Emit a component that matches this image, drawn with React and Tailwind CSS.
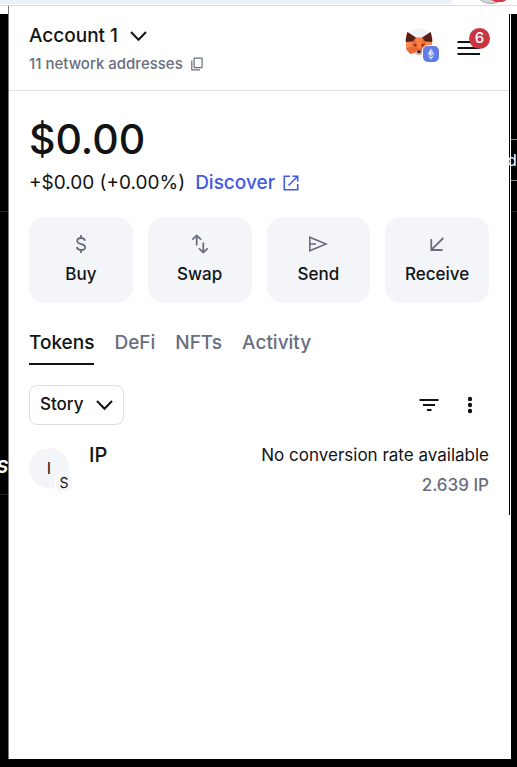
import React, { useState } from "react";

const tabs = ["Tokens", "DeFi", "NFTs", "Activity"];

const ChevronDown = () => (
  <svg width="17" height="18" viewBox="0 0 17 18" fill="none" stroke="currentColor" strokeWidth="2">
    <path d="M1 5 L8.5 12.8 L16 5" />
  </svg>
);

const CopyIcon = () => (
  <svg width="12" height="14" viewBox="0 0 12 14" fill="none" stroke="currentColor" strokeWidth="1.2">
    <rect x="3.1" y="1.1" width="8" height="9.5" rx="0.6" />
    <path d="M0.8 3.5 V12.9 H9" />
  </svg>
);

const ExternalIcon = () => (
  <svg width="16" height="16" viewBox="0 0 16 16" fill="none" stroke="currentColor" strokeWidth="1.6">
    <path d="M7 1.3 H1.3 V14.7 H14.7 V9" />
    <path d="M9.5 1.3 H14.7 V6.5" />
    <path d="M14.5 1.5 L5.5 10.5" />
  </svg>
);

const DollarIcon = () => (
  <svg width="20" height="20" viewBox="0 0 20 20" fill="none" stroke="currentColor" strokeWidth="1.8">
    <path d="M14 6.8 C13.6 5 12.2 4 10.1 4 C7.8 4 6.2 5.1 6.2 6.9 C6.2 8.8 7.8 9.4 10 10 C12.6 10.6 14.2 11.3 14.2 13.2 C14.2 15 12.6 16 10.2 16 C7.8 16 6.2 14.9 5.8 13" />
    <path d="M10 1 V4 M10 16 V19" />
  </svg>
);

const SwapIcon = () => (
  <svg width="20" height="20" viewBox="0 0 20 20" fill="none" stroke="currentColor" strokeWidth="1.8">
    <path d="M6.7 11.5 V1.5 M2.3 5.6 L6.7 1.4 L11.1 5.6" />
    <path d="M13.3 8.5 V18.5 M8.9 14.4 L13.3 18.6 L17.7 14.4" />
  </svg>
);

const SendIcon = () => (
  <svg width="20" height="20" viewBox="0 0 20 20" fill="none" stroke="currentColor" strokeWidth="1.6">
    <path d="M1.8 3.2 V16.8 L18 10 Z" />
    <path d="M2 10 H8" />
  </svg>
);

const ReceiveIcon = () => (
  <svg width="20" height="20" viewBox="0 0 20 20" fill="none" stroke="currentColor" strokeWidth="1.8">
    <path d="M16.3 4 L4.6 15.7 M4.3 5 V16 H15.5" />
  </svg>
);

const FoxIcon = () => (
  <svg width="28" height="28" viewBox="0 0 28 28">
    <circle cx="14" cy="14" r="13.5" fill="#f1f3f8" />
    <path d="M2 4 L10.5 9.5 H17.5 L26 4 L27.5 13 L26 17 L27 20 L23 25 L17 24.5 L15.5 27 H12.5 L11 24.5 L5 26 L1 21 L2 17 L0.5 13 Z" fill="#ee6a33" />
    <path d="M2.5 4 L10.8 9.6 L7.5 14 L1 14 L0.8 11 Z" fill="#54201a" />
    <path d="M25.5 4 L17.2 9.6 L20.5 14 L27 14 L27.2 11 Z" fill="#54201a" />
    <path d="M1 14 L8 13.6 L6 19 L1 20 Z" fill="#ff8a50" />
    <path d="M27 14 L20 13.6 L22 19 L27 20 Z" fill="#ff8a50" />
    <path d="M11 10 H17 L16 20 H12 Z" fill="#ff7f45" />
    <path d="M8 15.5 L12 17 L10.8 18.8 Z M20 15.5 L16 17 L17.2 18.8 Z" fill="#5c2018" />
    <path d="M11 24.5 L12 22.5 H16 L17 24.5 L15.5 27 H12.5 Z" fill="#c9b4ae" />
    <path d="M12.3 22.5 H15.7 L15.3 25 H12.7 Z" fill="#33110d" />
  </svg>
);

const EthIcon = () => (
  <svg width="16" height="16" viewBox="0 0 16 16">
    <rect width="16" height="16" rx="5" fill="#627ce6" />
    <path d="M8 2.5 L11.2 8 L8 10 L4.8 8 Z" fill="#dfe6ff" />
    <path d="M8 2.5 L11.2 8 L8 10 Z" fill="#b3c2fa" />
    <path d="M4.8 9.2 L8 13.5 L11.2 9.2 L8 11.1 Z" fill="#dfe6ff" />
  </svg>
);

const MenuIcon = () => (
  <svg width="24" height="16" viewBox="0 0 24 16" fill="none" stroke="currentColor" strokeWidth="2">
    <path d="M0.5 2 H23 M0.5 8 H23 M0.5 14 H23" />
  </svg>
);

const FilterIcon = () => (
  <svg width="20" height="14" viewBox="0 0 20 14" fill="none" stroke="currentColor" strokeWidth="2">
    <path d="M0.5 2 H19.5 M4 7 H16 M8 12 H12.5" />
  </svg>
);

const MoreIcon = () => (
  <svg width="6" height="18" viewBox="0 0 6 18" fill="currentColor">
    <circle cx="3" cy="3" r="2.2" />
    <circle cx="3" cy="9" r="2.2" />
    <circle cx="3" cy="15" r="2.2" />
  </svg>
);

const actions = [
  { label: "Buy", icon: DollarIcon },
  { label: "Swap", icon: SwapIcon },
  { label: "Send", icon: SendIcon },
  { label: "Receive", icon: ReceiveIcon },
];

const Header = () => (
  <header className="flex items-start justify-between border-b border-[#dddfe3] h-[85px] px-5">
    <div className="flex flex-col gap-1 pt-4">
      <button className="flex items-center gap-3 text-[19px] leading-7 font-medium">
        Account 1 <ChevronDown />
      </button>
      <button className="flex items-center gap-2 text-[15px] leading-5 font-medium text-[#686e7d]">
        11 network addresses <CopyIcon />
      </button>
    </div>
    <div className="flex items-start gap-6 pt-[22px]">
      <button aria-label="Connected site" className="relative">
        <FoxIcon />
        <span className="absolute -right-[7px] -bottom-[7px] rounded-md border border-white">
          <EthIcon />
        </span>
      </button>
      <button aria-label="Menu" className="relative mr-[10px] mt-3">
        <MenuIcon />
        <span className="absolute -top-3 left-3 flex size-[21px] items-center justify-center rounded-full bg-[#ca3542] text-[15px] font-medium text-white">6</span>
      </button>
    </div>
  </header>
);

const App = () => {
  const [active, setActive] = useState("Tokens");

  return (
    <div className="min-h-screen flex flex-col overflow-hidden bg-black text-[#121314] font-['Inter',sans-serif]">
      {/* browser toolbar */}
      <div className="relative h-[6px] overflow-hidden bg-white border-b border-[#dcdde0]">
        <div className="h-1 w-7/8 rounded-br-lg bg-[#e9f1fa]"></div>
        <div className="absolute right-2 -top-8 size-9 rounded-full border border-[#a9a9ac] bg-[#d6d6d8]"></div>
        <div className="absolute right-[10px] -top-2 h-[10px] w-4 rounded-full bg-[#dc3545]"></div>
      </div>

      <div className="flex flex-1">
        {/* page behind, left edge */}
        <div className="relative w-2 overflow-hidden border-t-8 border-white">
          <div className="mt-[197px] h-[284px] border-y border-[#222224]"></div>
          <span className="absolute right-0 top-[439px] text-lg font-bold italic text-white">S</span>
        </div>

        <main className="relative mb-2 flex-1 border-l border-[#77777a] bg-white">
          <div className="absolute right-px top-2 h-[501px] w-px bg-black"></div>
          <Header />

          <section className="pl-5 pr-[22px] pt-6">
            <h1 className="text-[41px] leading-[48px] font-medium">$0.00</h1>
            <div className="mt-2 flex items-center gap-[10px] text-[19px] leading-6">
              <span>+$0.00 (+0.00%)</span>
              <a href="#discover" className="flex items-center gap-2 font-medium text-[#4459ea]">
                Discover <ExternalIcon />
              </a>
            </div>

            <div className="mt-[22px] grid grid-cols-4 gap-[15px]">
              {actions.map((item) => (
                <button key={item.label} className="flex h-[86px] flex-col items-center justify-center gap-2 rounded-2xl bg-[#f3f5f9] text-[17px] leading-6 font-medium">
                  <span className="text-[#686e7d]">
                    <item.icon />
                  </span>
                  {item.label}
                </button>
              ))}
            </div>

            <nav className="mt-7 flex gap-5">
              {tabs.map((tab) => (
                <button
                  key={tab}
                  onClick={() => setActive(tab)}
                  className={`border-b-2 pb-2 text-[19px] leading-6 font-medium ${active === tab ? "border-[#121314]" : "border-transparent text-[#686e7d]"}`}
                >
                  {tab}
                </button>
              ))}
            </nav>

            <div className="mt-5 flex items-center justify-between">
              <button className="flex h-10 items-center gap-3 rounded-lg border border-[#dddfe3] px-[10px] text-[17px] font-medium">
                Story <ChevronDown />
              </button>
              <div className="flex items-center gap-7 mr-4">
                <button aria-label="Sort"><FilterIcon /></button>
                <button aria-label="More"><MoreIcon /></button>
              </div>
            </div>

            <div className="mt-[15px] flex justify-between">
              <div className="flex gap-5">
                <div className="relative mt-2 flex size-10 items-center justify-center rounded-full bg-[#f3f5f9]">
                  I
                  <span className="absolute -right-1 -bottom-1 flex size-[18px] items-center justify-center rounded-md border border-white bg-[#f3f5f9] text-sm">S</span>
                </div>
                <p className="text-xl leading-[30px] font-medium">IP</p>
              </div>
              <div className="text-right text-[17px] leading-[30px]">
                <p>No conversion rate available</p>
                <p className="font-medium text-[#686e7d]">2.639 IP</p>
              </div>
            </div>
          </section>
        </main>

        {/* page behind, right edge */}
        <div className="relative w-[6px] border-t-8 border-white">
          <div className="mt-[125px] h-[42px] border-y border-[#8a8a8c]"></div>
          <div className="mt-[30px] border-t border-[#222224]"></div>
          <span className="absolute -left-1 top-[134px] text-base text-white">de</span>
        </div>
      </div>
    </div>
  );
};

export default App;
